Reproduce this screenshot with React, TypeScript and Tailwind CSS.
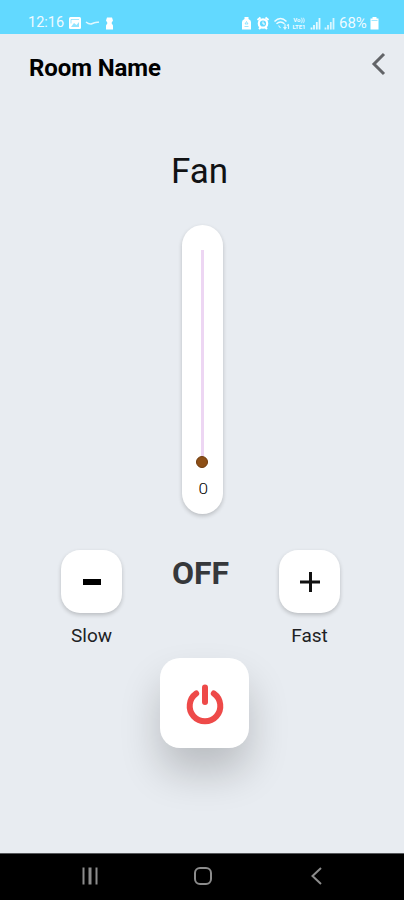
import { useState } from "react";

function StatusBar() {
  return (
    <div className="flex h-[34px] items-start justify-between bg-[#62d9ff] pl-[28px] pr-[25px] pt-[15px] text-white">
      <div className="flex h-4 items-center">
        <span className="w-[36px] text-[14.5px] leading-4 opacity-90">12:16</span>
        <svg className="ml-[4px]" width="50" height="14" viewBox="0 0 50 14" fill="none">
          {/* Gallery */}
          <rect x="1" y="1" width="12" height="12" rx="1.5" fill="#fff" />
          <path d="M3 11l3-4 2.500 2 2.500-3v5z" fill="#62d9ff" opacity=".7" />
          <path d="M3 3.500h8M3 3.500v4" stroke="#62d9ff" opacity=".6" />
          {/* Missed call */}
          <path d="M18 6c3 2.500 4.500 2.500 6.500 1.500S28 6.500 31 6" stroke="#fff" strokeWidth="1.500" opacity=".8" />
          {/* Key */}
          <path d="M39 1.500h5l1 3-1.500 2.500 1.500 2.500v4h-7v-4l1.500-2.500-1.500-2.500z" fill="#fff" />
        </svg>
      </div>
      <div className="flex h-4 items-center">
        <svg width="50" height="14" viewBox="0 0 50 14" fill="none" stroke="#fff">
          {/* Battery saver */}
          <path d="M1 13.500V6q0-2 2.500-3V1h4v2q2.500 1 2.500 3v7.500z" fill="#fff" stroke="none" />
          <path d="M5.500 5.500l1.500 2.500h-3zM3.500 10.500h4" stroke="#62d9ff" strokeWidth=".8" opacity=".8" />
          {/* Alarm */}
          <circle cx="22" cy="7.500" r="4.200" strokeWidth="2.200" />
          <path d="M16.500 4l3-2.500M27.500 4l-3-2.500M18 13l1.500-1.500M26 13l-1.500-1.500" strokeWidth="2" />
          <path d="M22 5.500v2.500h2" />
          {/* Wifi */}
          <path d="M33.500 5.500q6-6 12 0M35.500 7.800q4-3.500 8 0" strokeWidth="1.500" opacity=".9" />
          <path d="M37.500 9.500l2 2.500M44 8v5M42.500 11l1.500 2 1.500-2M47.500 13V8.500M46 10l1.500-2" strokeWidth="1.200" opacity=".8" />
        </svg>
        <div className="w-[16px] text-center text-[6px] font-bold leading-[7px] opacity-90">
          <div>Vo))</div>
          <div>LTE1</div>
        </div>
        {/* Signal */}
        <svg className="ml-[3px]" width="25" height="14" viewBox="0 0 25 14" fill="none" stroke="#fff" strokeWidth="1.800">
          <path d="M1.500 13.500v-2M4 13.500V9M6.800 13.500V6M9.500 13.500V2" opacity=".85" />
          <path d="M15.500 13.500v-2M18 13.500V9M20.800 13.500V6M23.500 13.500V2" opacity=".75" />
        </svg>
        <span className="ml-[4px] w-[29px] text-[15px] leading-4 opacity-90">68%</span>
        <svg className="ml-[2px]" width="9" height="14" viewBox="0 0 9 14">
          <path d="M2.500 1h4v1.500h2V13.500h-8V2.500h2z" fill="#fff" />
          <path d="M1.500 4.500h6" stroke="#62d9ff" opacity=".6" />
        </svg>
      </div>
    </div>
  );
}

function Header() {
  return (
    <header className="flex h-[68px] items-center justify-between pl-[29px] pr-[18px]">
      <h1 className="text-[24px] font-bold leading-7 tracking-[-0.1px] text-black">Room Name</h1>
      <button type="button" aria-label="Back" className="mb-[8px]">
        <svg width="15" height="24" viewBox="0 0 15 24" fill="none" stroke="#626468" strokeWidth="3">
          <path d="M13 2L3 12l10 10" />
        </svg>
      </button>
    </header>
  );
}

function SpeedSlider({ speed }: { speed: number }) {
  return (
    <div className="flex h-[289px] w-[41px] flex-col items-center rounded-full bg-white pt-[25px] shadow-[0_2px_4px_rgba(0,0,0,0.2)]">
      <div className="mr-[1px] h-[206px] w-[3px] bg-[#edd6f3]" />
      <div className="mr-[1px] size-3 rounded-full border border-[#6f3a0c] bg-[#8d4f16]" />
      <span className="ml-[1px] mt-[12px] scale-x-115 text-[15px] font-light leading-[18px] text-black">{speed}</span>
    </div>
  );
}

function StepButton({ label, icon, onClick }: { label: string; icon: React.ReactNode; onClick: () => void }) {
  return (
    <div className="flex w-[61px] flex-col items-center">
      <button
        type="button"
        aria-label={label}
        onClick={onClick}
        className="flex h-[63px] w-[61px] items-center justify-center rounded-[19px] bg-white shadow-[0_2px_4px_rgba(0,0,0,0.2)]"
      >
        {icon}
      </button>
      <span className="mt-[12px] text-[19px] leading-[22px] text-[#202124]">{label}</span>
    </div>
  );
}

function NavBar() {
  return (
    <nav className="h-[47px] border-t border-[#55575a] bg-black">
      <svg width="404" height="46" viewBox="0 0 404 46" fill="none" stroke="#8c8c8c" strokeWidth="2">
        <path d="M83.500 13.500v17M96.500 13.500v17" />
        <path d="M90 13.500v17" strokeWidth="3" />
        <rect x="195" y="14" width="16" height="16" rx="5" />
        <path d="M321 14l-8.500 8 8.500 8" />
      </svg>
    </nav>
  );
}

export default function App() {
  const [speed, setSpeed] = useState(0);

  return (
    <div className="flex h-[900px] w-[404px] flex-col overflow-hidden bg-[#e8ecf1] font-['Roboto',sans-serif]">
      <StatusBar />
      <Header />

      <main className="flex flex-1 flex-col items-center">
        <h2 className="-ml-[5px] mt-[49px] text-[35px] leading-[42px] text-[#111214]">Fan</h2>
        <div className="ml-[1px] mt-[32px]">
          <SpeedSlider speed={speed} />
        </div>

        {/* Speed controls */}
        <div className="mt-[36px] flex w-full items-start justify-between pl-[61px] pr-[64px]">
          <StepButton
            label="Slow"
            onClick={() => setSpeed(Math.max(0, speed - 1))}
            icon={<span className="h-[6px] w-[18px] bg-black" />}
          />
          <span className="mt-[4px] text-[32px] font-bold leading-[38px] text-[#36383b]">{speed > 0 ? "ON" : "OFF"}</span>
          <StepButton
            label="Fast"
            onClick={() => setSpeed(speed + 1)}
            icon={
              <svg width="20" height="20" viewBox="0 0 20 20" stroke="#111" strokeWidth="3">
                <path d="M10.500 0v20M0 10h20" />
              </svg>
            }
          />
        </div>

        <button
          type="button"
          aria-label="Power"
          onClick={() => setSpeed(speed > 0 ? 0 : 1)}
          className="ml-[5px] mt-[11px] flex h-[90px] w-[89px] items-center justify-center rounded-[20px] bg-white shadow-[0_24px_40px_rgba(0,0,0,0.2)]"
        >
          <svg width="40" height="44" viewBox="0 0 40 44" fill="none" stroke="#ee4a49" strokeWidth="6" strokeLinecap="round">
            <path d="M20 6.500v14.500" />
            <path d="M11.200 12.500a15.300 15.300 0 1 0 17.600 0" />
          </svg>
        </button>
      </main>

      <NavBar />
    </div>
  );
}
